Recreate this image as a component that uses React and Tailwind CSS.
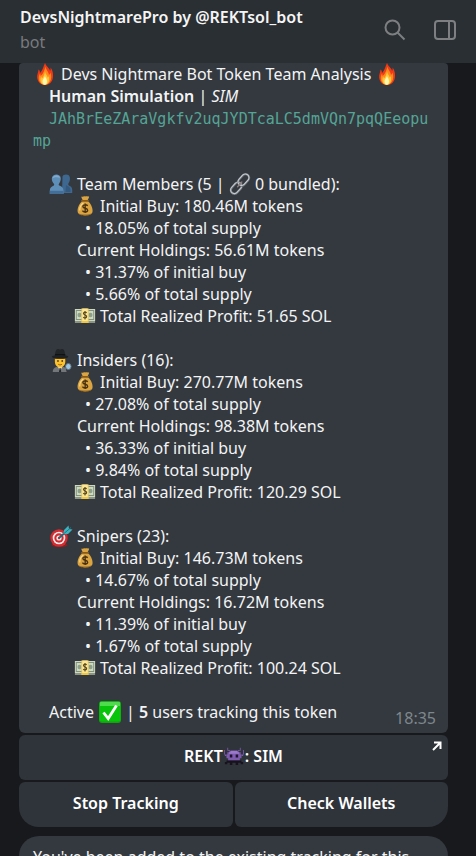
import React from 'react';

const Emoji = ({ label, className, viewBox = '0 0 24 24', children }) => (
  <svg viewBox={viewBox} preserveAspectRatio="none" role="img" aria-label={label} className={`inline-block shrink-0 ${className}`}>
    {children}
  </svg>
);

const Fire = () => (
  <Emoji label="fire" className="mx-0.5 h-6 w-5">
    <path d="M12 1c1 3 6 5.500 6 8 1-1 .8-2.500.8-3.500C21.500 9 22 12 21.500 15.500 21 20 17 23 12 23S3 20 2.600 15.500C2.300 12.500 4 10.500 4.300 7.500c1.500 1 1.700 2.500 1.700 3.500 2.500-1.500 4-6 6-10z" fill="#f03a17" />
    <path d="M12.500 4.500c.5 3.500 4 5 4.200 8.500 1-.5 1.500-1.500 1.600-2.500 1.800 3 1.500 6.500-.3 9-1.500 2-3.500 3.300-6 3.300-4.500 0-7.500-3-7.500-6.800 0-2 .8-3 1.500-4.500.5 1 .5 1.500.8 2.500 3-2 4.500-5.500 5.700-9.500z" fill="#ff8a1c" />
    <path d="M12 9.500c.5 2.500 3 4 3.200 6 .8-.3 1-1 1.200-1.500 1 2.500.7 5-.6 6.700-1 1.300-2.300 2-3.800 2-3 0-5.500-2-5.500-5 0-1.500.5-2.200 1-3 .4.700.6 1 .8 1.800 2-1.500 3-4 3.700-7z" fill="#ffc83a" />
    <path d="M12 14c.5 1.500 2.500 3 2.500 5.200 0 2.200-1.200 3.600-2.700 3.600S9 21.400 9 19.500c0-2 2-3.500 3-5.500z" fill="#fff6b0" />
  </Emoji>
);

const Team = () => (
  <Emoji label="team" className="size-6">
    <g fill="#3f6890">
      <path d="M13.500 4.500c1-2.500 6.500-2.800 7.300.7.500 2-.2 4.500-1.300 6-.4.600-.3 1.800.4 2.200 2 .8 3.300 1.600 3.300 4.600v3H13z" />
      <path d="M17 13c2 1.500 4 1.500 4.500 5v2h-5z" fill="#33597e" />
    </g>
    <path d="M2.800 6.500C3 1.500 11.500 1 11.800 6.300c.1 2-.8 4.300-1.800 5.400-.5.600-.4 1.500.3 1.900 2.400 1 4.200 2 4.200 5.200V22H.8v-3.200c0-3.200 1.600-4.300 3.700-5.100.8-.4.900-1.400.4-2C3.700 10.500 2.700 8.500 2.800 6.500z" fill="#5e8fb8" />
    <path d="M3.500 6.300C4 2.500 10.500 2 11 6 9 4.800 5.500 4.800 3.500 6.300z" fill="#80abcd" />
    <path d="M.8 18.800h13.700V22H.8z" fill="#446e96" />
  </Emoji>
);

const Link = () => (
  <Emoji label="link" className="size-[22px]">
    <g fill="none" strokeLinecap="round" transform="rotate(-48 12 12)">
      <rect x="-1" y="8" width="14" height="8" rx="4" stroke="#6f757b" strokeWidth="2.400" />
      <rect x="-1" y="7.700" width="14" height="8" rx="4" stroke="#c3c9ce" strokeWidth="1.200" />
      <rect x="11" y="8" width="14" height="8" rx="4" stroke="#666c72" strokeWidth="2.400" />
      <rect x="11" y="7.700" width="14" height="8" rx="4" stroke="#c8ced3" strokeWidth="1.200" />
      <path d="M8 12h7" stroke="#8b7d7d" strokeWidth="1.400" />
    </g>
  </Emoji>
);

const MoneyBag = () => (
  <Emoji label="money bag" viewBox="2 1 20 23" className="h-5 w-4">
    <path d="M7.500 1.500c2 1 3-.8 4.700 0 1.500-.8 3.300.5 4.800-.3.600 1.800-1.500 3.500-2 5.300 4 2.500 6.500 7.500 6.500 11.500 0 4-3.500 5.300-9.300 5.300S2.700 22 2.700 18c0-4 2.500-9 6.600-11.500-.3-1.600-2.200-3.200-1.800-5z" fill="#d9a441" />
    <path d="M8 6.500h8" stroke="#8a5b18" strokeWidth="2" strokeLinecap="round" />
    <path d="M5.500 17c0-3.500 1.500-6 4-7.500" stroke="#f7d888" strokeWidth="1.500" fill="none" strokeLinecap="round" />
    <path d="M3.500 20.500c3 2.500 14 2.500 17 0-1 2.200-4 2.800-8.500 2.800s-7.500-.6-8.500-2.800z" fill="#99671c" />
    <path d="M15.300 12.300c-1-1.500-6-1.700-6 .8 0 2.600 6 1.400 6 4.200 0 2.600-5.300 2.500-6.500.6M12.200 9.500v11" stroke="#49300e" strokeWidth="1.700" fill="none" />
  </Emoji>
);

const Cash = () => (
  <Emoji label="cash" className="h-6 w-[22px]">
    <rect x="1" y="5" width="22" height="14" fill="#8c9583" />
    <rect x="1" y="5" width="22" height="12" fill="#cfd8c0" />
    <rect x="2.500" y="6.500" width="19" height="9" fill="none" stroke="#7f927c" />
    <circle cx="6" cy="11" r="2.200" fill="#8ba08a" />
    <circle cx="18" cy="11" r="2.200" fill="#8ba08a" />
    <rect x="8" y="4.500" width="8" height="14.500" fill="#f0c647" />
    <rect x="9" y="4.500" width="6" height="12.500" fill="#fbe79b" />
    <path d="M13.800 8.800c-.8-1-3.500-1-3.500.8 0 1.700 3.500 1 3.500 2.800s-2.800 1.800-3.700.7M12 7v8.500" stroke="#5a4a1e" strokeWidth="1.200" fill="none" />
  </Emoji>
);

const Detective = () => (
  <Emoji label="detective" className="mx-px h-6 w-[22px]">
    <path d="M3 24c0-4 3-5.500 8-5.500s8 1.500 8 5.500z" fill="#73777a" />
    <path d="M8.500 18.500 11 23l2.500-4.500z" fill="#e9eaec" />
    <path d="M10.400 20h1.200l.6 4h-2.400z" fill="#24272a" />
    <path d="M5.300 9h11.400v4.500c0 3.500-2.500 6-5.700 6s-5.700-2.500-5.700-6z" fill="#fcc32c" />
    <path d="M5 9h12v3l-1-1.500H6L5 12z" fill="#5e3d24" />
    <circle cx="8.700" cy="13" r=".9" fill="#43301d" />
    <circle cx="13.300" cy="13" r=".9" fill="#43301d" />
    <path d="M9 16.300c1.300.8 2.700.8 4 0" stroke="#8c4e12" strokeWidth=".9" fill="none" />
    <path d="M5.500 8c0-4 1-7 3-7 1 0 1.500.6 2.500.6S12.500 1 13.500 1c2 0 3 3 3 7z" fill="#222527" />
    <path d="M5.400 6h11.200v2H5.400z" fill="#101213" />
    <ellipse cx="11" cy="8.800" rx="9" ry="1.900" fill="#1f2224" />
    <path d="m18 21 1 3" stroke="#343536" strokeWidth="1.500" />
    <circle cx="20" cy="18.500" r="3" fill="#9bc9e5" stroke="#66737d" />
  </Emoji>
);

const Target = () => (
  <Emoji label="target" className="size-6">
    <ellipse cx="10.500" cy="21" rx="8" ry="2" fill="#8a2020" />
    <circle cx="10" cy="14" r="8.700" fill="#d52b30" />
    <circle cx="10" cy="14" r="6.300" fill="#f4ecec" />
    <circle cx="10" cy="14" r="4.700" fill="#d52b30" />
    <circle cx="10" cy="14" r="2.600" fill="#f4ecec" />
    <circle cx="10" cy="14" r="1.200" fill="#d52b30" />
    <path d="m10 14 8.500-7.500" stroke="#24687b" strokeWidth="2" />
    <path d="m14.500 10 .5-4 4.500-4.500.5 3.500 3.500.5-4.500 4.500z" fill="#3fb2c0" />
    <path d="m15 9.500 7-6" stroke="#1e7888" strokeWidth="1" />
  </Emoji>
);

const Check = () => (
  <Emoji label="active" className="size-6">
    <rect x="1" y="1" width="22" height="22" rx="3" fill="#12a30f" />
    <rect x="1.500" y="1.500" width="21" height="20" rx="2.500" fill="#08c40b" />
    <path d="M3 2h18c.8 0 1 .5 1 1v3H2V3c0-.5.2-1 1-1z" fill="#4edb4c" />
    <path d="m5.500 12.500 4.700 6L18.500 5.500" fill="none" stroke="#fff" strokeWidth="2.800" />
  </Emoji>
);

const Alien = () => (
  <Emoji label="alien" className="mx-px h-[18px] w-5">
    <g fill="#7f5bb0">
      <path d="M7 5h10v2h3v3h1v5h-2v3H5v-3H3v-5h1V7h3z" />
      <path d="M4 1h1v3h2v2H6V5H4zM19 1h1v4h-2v1h-1V4h2zM0 4h1v6h2v2H1v-2H0zM23 4h1v6h-1v2h-2v-2h2z" />
    </g>
    <path d="M8 5h8v2h2v2H6V7h2z" fill="#9b78cc" />
    <path d="M7 10h3v4H7zM14 10h3v4h-3z" fill="#20142b" />
    <path d="M3 18h18v2h2v3h-3v-2h-3v3h-3v-3h-4v3H7v-3H4v2H1v-3h2z" fill="#17121e" />
  </Emoji>
);

const groups = [
  {
    icon: <Team />,
    title: <>Team Members (5 | <Link /> 0 bundled):</>,
    buy: '180.46M',
    buySupply: '18.05%',
    holdings: '56.61M',
    ofBuy: '31.37%',
    ofSupply: '5.66%',
    profit: '51.65',
  },
  {
    icon: <Detective />,
    title: 'Insiders (16):',
    buy: '270.77M',
    buySupply: '27.08%',
    holdings: '98.38M',
    ofBuy: '36.33%',
    ofSupply: '9.84%',
    profit: '120.29',
  },
  {
    icon: <Target />,
    title: 'Snipers (23):',
    buy: '146.73M',
    buySupply: '14.67%',
    holdings: '16.72M',
    ofBuy: '11.39%',
    ofSupply: '1.67%',
    profit: '100.24',
  },
];

const Group = ({ group }) => (
  <section className="mt-[22px] pl-4">
    <h2 className="flex h-[22px] items-center gap-1 whitespace-pre">
      {group.icon}
      <span className="flex items-center">{group.title}</span>
    </h2>
    <div className="pl-7">
      <p className="flex h-[22px] items-center gap-[7px]">
        <MoneyBag />
        <span>Initial Buy: {group.buy} tokens</span>
      </p>
      <p className="pl-2">• {group.buySupply} of total supply</p>
      <p>Current Holdings: {group.holdings} tokens</p>
      <p className="pl-2">• {group.ofBuy} of initial buy</p>
      <p className="pl-2">• {group.ofSupply} of total supply</p>
      <p className="-ml-[3px] flex h-[22px] items-center gap-1">
        <Cash />
        <span>Total Realized Profit: {group.profit} SOL</span>
      </p>
    </div>
  </section>
);

const Header = () => (
  <header className="flex h-[63px] shrink-0 items-start justify-between bg-[#2a2f34] px-5 pt-[5px]">
    <div>
      <h1 className="text-base leading-[25px] font-semibold text-[#f5f5f5]">DevsNightmarePro by @REKTsol_bot</h1>
      <p className="text-base leading-[25px] text-[#797b7d]">bot</p>
    </div>
    <div className="flex items-center gap-7 pt-3.5 text-[#7d7f81]">
      <button type="button" aria-label="Search">
        <svg viewBox="0 0 22 22" className="size-[22px]" fill="none" stroke="currentColor" strokeWidth="2">
          <circle cx="8.500" cy="8.500" r="7" />
          <path d="m13.500 13.500 7 7" />
        </svg>
      </button>
      <button type="button" aria-label="Toggle side panel">
        <svg viewBox="0 0 22 22" className="size-[22px]" fill="none" stroke="currentColor" strokeWidth="2">
          <rect x="1" y="2" width="20" height="18" rx="3" />
          <path d="M15 2v18" />
        </svg>
      </button>
    </div>
  </header>
);

const App = () => (
  <div className="flex h-screen flex-col overflow-hidden bg-[#18191c] font-['Noto_Sans',sans-serif] text-base leading-[22px] text-[#f3f4f5]">
    <Header />
    <main className="min-h-0 flex-1 overflow-hidden pl-[19px] pr-7">
      <article className="relative rounded-t-sm rounded-b-md bg-[#34393f] px-3.5 pb-2.5">
        <p className="flex h-[22px] items-center gap-1">
          <Fire />
          <span>Devs Nightmare Bot Token Team Analysis</span>
          <Fire />
        </p>
        <p className="pl-4">
          <strong className="font-semibold">Human Simulation</strong> | <em>SIM</em>
        </p>
        <p className="pt-px -mb-px indent-4 font-['DejaVu_Sans_Mono',monospace] text-[15px] leading-[22px] break-all text-[#54a596]">
          JAhBrEeZAraVgkfv2uqJYDTcaLC5dmVQn7pqQEeopump
        </p>
        {groups.map(group => (
          <Group key={group.buy} group={group} />
        ))}
        <p className="mt-[22px] flex h-[22px] items-center gap-1 pl-4">
          <span>Active</span>
          <Check />
          <span>| <strong className="font-semibold">5</strong> users tracking this token</span>
        </p>
        <time className="absolute right-3 bottom-1 text-base leading-[22px] text-[#7e878c]">18:35</time>
      </article>

      <div className="mt-0.5 grid grid-cols-2 gap-0.5 font-semibold text-white">
        <a href="#sim" className="relative col-span-2 flex h-[45px] items-center justify-center rounded-md bg-[#2f343a] pb-1">
          <span>REKT</span>
          <Alien />
          <span>: SIM</span>
          <svg viewBox="0 0 10 10" className="absolute top-1.5 right-1.5 size-2.5" fill="none" stroke="currentColor" strokeWidth="2">
            <path d="M2 1.500h6.500V8M8.500 1.500 1 9" />
          </svg>
        </a>
        <button type="button" className="h-[45px] rounded-md rounded-bl-[20px] bg-[#2f343a] pb-1">Stop Tracking</button>
        <button type="button" className="h-[45px] rounded-md rounded-br-[20px] bg-[#2f343a] pb-1">Check Wallets</button>
      </div>

      <article className="mt-[9px] rounded-[20px] bg-[#34393f] px-3.5 py-2.5">
        <p>You've been added to the existing tracking for this</p>
      </article>
    </main>
  </div>
);

export default App;
